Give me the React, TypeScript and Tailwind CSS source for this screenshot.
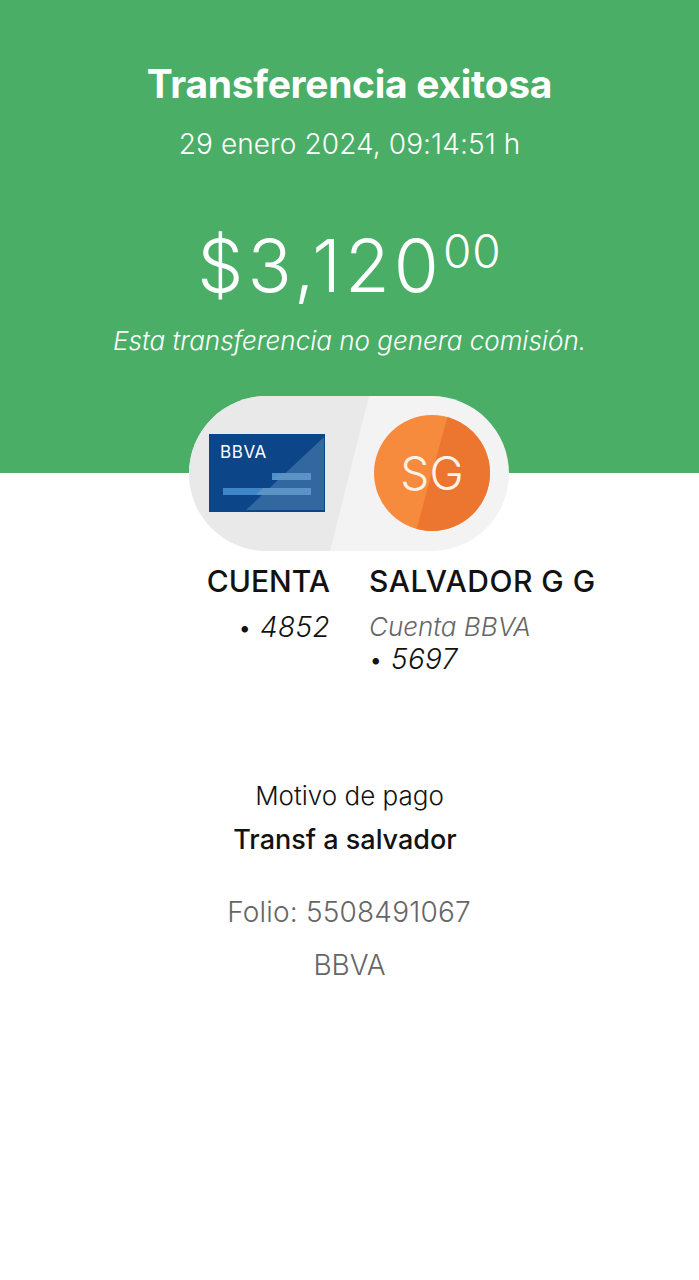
export default function App() {
  return (
    <div className="relative min-h-[1280px] w-[699px] bg-white font-['Inter',sans-serif] text-[#121212]">
      <header className="flex h-[473px] flex-col items-center bg-[#4aae66] text-white">
        <h1 className="mt-[60px] h-[48px] text-[39px] font-bold leading-[48px] tracking-[-0.3px]">Transferencia exitosa</h1>
        <p className="mt-[19px] text-[28px] font-light leading-[34px] tracking-[0.1px]">29 enero 2024, 09:14:51 h</p>
        <div className="mt-[65px] flex h-[80px] items-start font-light">
          <span className="text-[73px] leading-[80px] tracking-[4px]">$3,120</span>
          <span className="text-[46px] leading-[50px] tracking-[1px]">00</span>
        </div>
        <p className="mt-[18px] text-[26px] font-light italic leading-[34px]">Esta transferencia no genera comisión.</p>
      </header>

      <div className="relative z-10 ml-[189px] mt-[-77px] flex h-[155px] w-[320px] items-center overflow-hidden rounded-[78px] bg-[#f3f3f3]">
        <div className="absolute inset-0 bg-[#e9e9e9] [clip-path:polygon(0_0,180px_0,141px_100%,0_100%)]"></div>
        <svg className="relative mb-[1px] ml-[20px] h-[78px] w-[116px]" viewBox="0 0 116 78" aria-hidden="true">
          <rect width="116" height="78" fill="#0c4689" />
          <polygon points="115,3 115,76 37,76" fill="#33679f" />
          <rect x="63" y="39" width="39" height="7" fill="#4f8fcb" />
          <rect x="14" y="54" width="88" height="7" fill="#3f86c9" />
          <polygon points="63,46 70,39 102,39 102,46" fill="#5b93c7" />
          <polygon points="47,61 54,54 102,54 102,61" fill="#5b93c7" />
        </svg>
        <span className="absolute left-[31px] top-[47px] text-[17px] font-normal leading-[19px] tracking-[0.6px] text-white">BBVA</span>
        <div className="relative mb-[1px] ml-[49px] flex h-[116px] w-[116px] items-center justify-center overflow-hidden rounded-full bg-[#f68b3d]">
          <div className="absolute inset-0 bg-[#ec752f] [clip-path:polygon(74px_0,100%_0,100%_100%,42px_100%)]"></div>
          <span className="relative text-[46px] font-light leading-none text-[#fdf3ea]">SG</span>
        </div>
      </div>

      <div className="mt-[11px] flex pl-[206px]">
        <div className="flex w-[124px] flex-col items-end">
          <p className="whitespace-nowrap text-[30px] font-medium leading-[38px]">CUENTA</p>
          <p className="mt-[11px] flex items-center gap-[8px] whitespace-nowrap text-[28px] font-light italic leading-[33px] tracking-[0.4px]"><span className="text-[24px] not-italic">•</span>4852</p>
        </div>
        <div className="ml-[39px] flex flex-col">
          <p className="whitespace-nowrap text-[30px] font-medium leading-[38px] tracking-[0.5px]">SALVADOR G G</p>
          <p className="mt-[10px] whitespace-nowrap text-[26px] font-light italic leading-[33px] text-[#666]">Cuenta BBVA</p>
          <p className="flex items-center gap-[8px] whitespace-nowrap text-[28px] font-light italic leading-[33px] tracking-[0.4px]"><span className="text-[24px] not-italic">•</span>5697</p>
        </div>
      </div>

      <div className="mt-[102px] flex flex-col items-center">
        <p className="text-[26px] font-light leading-[36px]">Motivo de pago</p>
        <p className="mr-[9px] mt-[8px] text-[27px] font-medium leading-[36px]">Transf a salvador</p>
        <p className="mr-[1px] mt-[36px] text-[28px] font-light leading-[36px] tracking-[0.2px] text-[#666]">Folio: 5508491067</p>
        <p className="mt-[17px] text-[28px] font-light leading-[36px] text-[#666]">BBVA</p>
      </div>
    </div>
  );
}
